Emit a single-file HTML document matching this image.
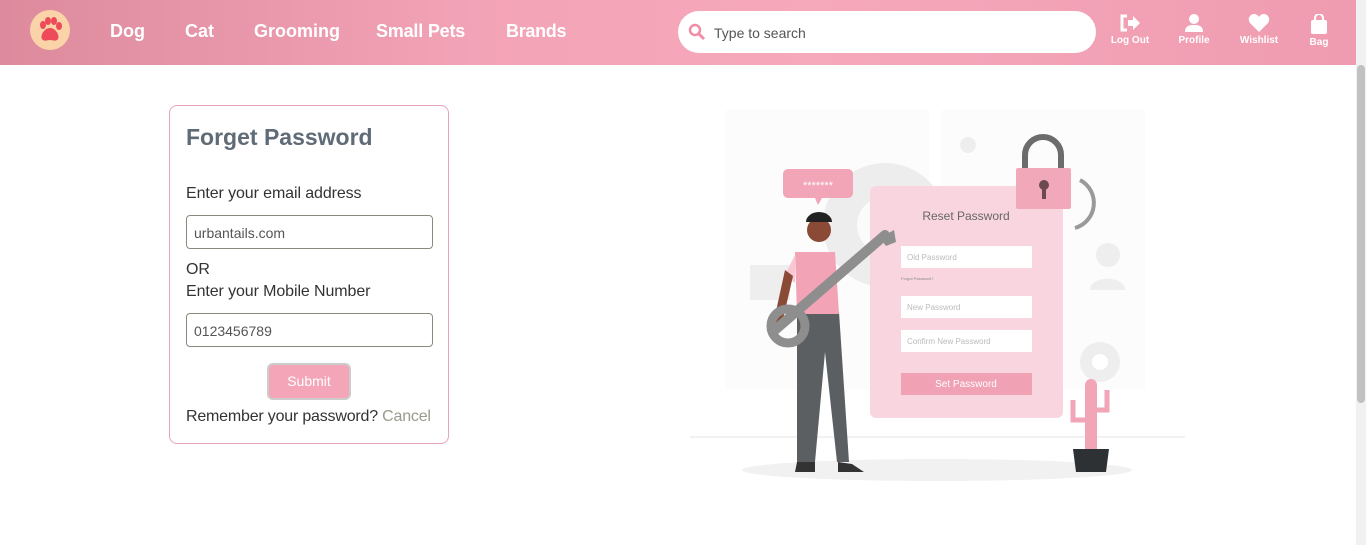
<!DOCTYPE html>
<html><head><meta charset="utf-8"><style>
*{box-sizing:border-box;margin:0;padding:0}
body{width:1366px;height:545px;overflow:hidden;background:#fff;font-family:"Liberation Sans",sans-serif;position:relative}
.hdr{position:absolute;left:0;top:0;width:1356px;height:65px;background:linear-gradient(90deg,#dd8a9d 0%,#f3a3b6 35%,#f6a9bb 60%,#ef9bb0 100%)}
.logo{position:absolute;left:30px;top:10px;width:40px;height:40px;border-radius:50%;background:#fbd3a8}
.nav{position:absolute;top:21px;color:#fff;font-weight:bold;font-size:18px}
.search{position:absolute;left:678px;top:11px;width:418px;height:42px;background:#fff;border-radius:21px}
.search span{position:absolute;left:36px;top:14px;font-size:14px;color:#555}
.ic{position:absolute;top:14px;width:50px;text-align:center;color:#fff;font-size:10px;font-weight:bold}
.ic svg{display:block;margin:0 auto 3px}
.sb{position:absolute;left:1356px;top:0;width:10px;height:545px;background:#f1f1f1}
.sb i{position:absolute;left:1px;top:65px;width:8px;height:338px;background:#c1c1c1;border-radius:4px}
.card{position:absolute;left:169px;top:105px;width:280px;height:339px;border:1px solid #e6a3c0;border-radius:8px;color:#444}
.card h1{position:absolute;left:16px;top:18px;font-size:23px;color:#5f6b76;font-weight:bold}
.lbl{position:absolute;left:16px;font-size:16px;color:#333;letter-spacing:-0.1px}
.inp{position:absolute;left:16px;width:247px;height:34px;border:1px solid #8a8a7c;border-radius:4px;font-size:14px;color:#555;padding:9px 7px}
.btn{position:absolute;left:97px;top:257px;width:84px;height:37px;background:#f4a6b8;border:2px solid #ccc;border-radius:6px;color:#fff;font-size:14px;text-align:center;line-height:33px}
</style></head><body>
<div class="hdr">
 <div class="logo"><svg width="40" height="40" viewBox="0 0 40 40"><g fill="#ee4a5a"><ellipse cx="13" cy="15" rx="3" ry="4"/><ellipse cx="18" cy="11" rx="3" ry="4"/><ellipse cx="24" cy="11" rx="3" ry="4"/><ellipse cx="29" cy="16" rx="3" ry="4"/><path d="M20 18c-6 0-10 8-8 11s5 1 8 1 6 2 8-1-2-11-8-11z"/></g></svg></div>
 <div class="nav" style="left:110px">Dog</div>
 <div class="nav" style="left:185px">Cat</div>
 <div class="nav" style="left:254px">Grooming</div>
 <div class="nav" style="left:376px;letter-spacing:-0.2px">Small Pets</div>
 <div class="nav" style="left:506px;letter-spacing:-0.3px">Brands</div>
 <div class="search"><svg style="position:absolute;left:10px;top:12px" width="18" height="18" viewBox="0 0 18 18"><circle cx="7" cy="7" r="5" fill="none" stroke="#ef8ea6" stroke-width="2.5"/><path d="M11 11l5 5" stroke="#ef8ea6" stroke-width="3"/></svg><span>Type to search</span></div>
 <div class="ic" style="left:1105px"><svg width="22" height="18" viewBox="0 0 22 18"><path d="M8 2H3v14h5" fill="none" stroke="#fff" stroke-width="3"/><path d="M9 6h5V2l7 7-7 7v-4H9z" fill="#fff"/></svg>Log Out</div>
 <div class="ic" style="left:1169px"><svg width="20" height="18" viewBox="0 0 20 18"><circle cx="10" cy="5" r="5" fill="#fff"/><path d="M1 18c0-6 4-7 9-7s9 1 9 7z" fill="#fff"/></svg>Profile</div>
 <div class="ic" style="left:1234px"><svg width="22" height="18" viewBox="0 0 22 18"><path d="M11 18L2 9C-1 5 2 0 6 0c2 0 4 1 5 3 1-2 3-3 5-3 4 0 7 5 4 9z" fill="#fff"/></svg>Wishlist</div>
 <div class="ic" style="left:1294px"><svg width="18" height="20" viewBox="0 0 18 20"><path d="M5 6V4a4 4 0 018 0v2" fill="none" stroke="#fff" stroke-width="2"/><rect x="1" y="6" width="16" height="14" rx="2" fill="#fff"/></svg>Bag</div>
</div>
<div class="sb"><i></i></div>
<div class="card">
 <h1>Forget Password</h1>
 <div class="lbl" style="top:79px">Enter your email address</div>
 <div class="inp" style="top:109px">urbantails.com</div>
 <div class="lbl" style="top:155px">OR</div>
 <div class="lbl" style="top:177px">Enter your Mobile Number</div>
 <div class="inp" style="top:207px">0123456789</div>
 <div class="btn">Submit</div>
 <div class="lbl" style="top:302px;letter-spacing:-0.2px">Remember your password? <span style="color:#9a9a8a">Cancel</span></div>
</div>
<svg style="position:absolute;left:0;top:0" width="1356" height="545" viewBox="0 0 1356 545">
 <rect x="726" y="110" width="203" height="280" fill="#fcfcfc"/>
 <rect x="942" y="110" width="203" height="280" fill="#fcfcfc"/>
 <line x1="690" y1="437" x2="1185" y2="437" stroke="#f2f2f2" stroke-width="2"/>
 <circle cx="885" cy="225" r="62" fill="#ededed"/><circle cx="885" cy="225" r="28" fill="#fbfbfb"/>
 <circle cx="1100" cy="362" r="20" fill="#eee"/><circle cx="1100" cy="362" r="8" fill="#fff"/>
 <circle cx="968" cy="145" r="8" fill="#eee"/><circle cx="1108" cy="255" r="12" fill="#eee"/><path d="M1090 290c0-15 35-15 35 0z" fill="#eee"/>
 <rect x="750" y="265" width="40" height="35" fill="#eee"/>
 <ellipse cx="937" cy="470" rx="195" ry="11" fill="#f1f1f1"/>
 <rect x="870" y="186" width="193" height="232" rx="6" fill="#f9d6df"/>
 <text x="966" y="220" font-size="12" fill="#666" text-anchor="middle" font-family="Liberation Sans">Reset Password</text>
 <rect x="901" y="246" width="131" height="22" fill="#fff"/><text x="907" y="260" font-size="8" fill="#bbb" font-family="Liberation Sans">Old Password</text>
 <text x="901" y="280" font-size="4" fill="#888" font-family="Liberation Sans">Forgot Password?</text>
 <rect x="901" y="296" width="131" height="22" fill="#fff"/><text x="907" y="310" font-size="8" fill="#bbb" font-family="Liberation Sans">New Password</text>
 <rect x="901" y="330" width="131" height="22" fill="#fff"/><text x="907" y="344" font-size="8" fill="#bbb" font-family="Liberation Sans">Confirm New Password</text>
 <rect x="901" y="373" width="131" height="22" fill="#f0a1b4"/><text x="966" y="387" font-size="10" fill="#fff" text-anchor="middle" font-family="Liberation Sans">Set Password</text>
 <path d="M1025 170v-15a18 18 0 0136 0v15" fill="none" stroke="#6c6c6c" stroke-width="6"/>
 <rect x="1016" y="168" width="55" height="41" rx="2" fill="#f1a9ba"/><circle cx="1044" cy="185" r="5" fill="#6b4b50"/><rect x="1042" y="186" width="4" height="13" fill="#6b4b50"/>
 <path d="M1080 180a26 26 0 01-5 48" fill="none" stroke="#999" stroke-width="4"/>
 <rect x="783" y="169" width="70" height="29" rx="5" fill="#f1a5b7"/><path d="M815 198l3 7 4-7z" fill="#f1a5b7"/><text x="818" y="189" font-size="11" fill="#fff" text-anchor="middle" font-family="Liberation Sans">*******</text>
 <path d="M797 312h42l10 150h-12l-12-110-10 110h-18z" fill="#5b5f61"/>
 <path d="M797 462l-2 10h20v-10zM838 462v10h26l-12-8z" fill="#333"/>
 <path d="M795 252h40l4 62h-42z" fill="#f2a3b6"/>
 <path d="M795 255l-10 20 10 8z" fill="#f9c6d2"/>
 <path d="M785 270l-12 55 8 3 12-52z" fill="#8a4a36"/>
 <circle cx="819" cy="230" r="12" fill="#8a4a36"/><path d="M806 222a13 10 0 0126 0z" fill="#222"/>
 <path d="M775 330L885 235" stroke="#8e8e8e" stroke-width="10" stroke-linecap="round"/>
 <path d="M880 238l14 -8 2 12-10 4z" fill="#8e8e8e"/>
 <circle cx="788" cy="326" r="17" fill="none" stroke="#8e8e8e" stroke-width="9"/>
 <path d="M1085 450v-65a6 6 0 0112 0v65z" fill="#f1a5b6"/><path d="M1085 420h-12v-20M1097 410h10v-20" fill="none" stroke="#f1a5b6" stroke-width="5"/>
 <path d="M1073 449h36l-3 23h-30z" fill="#2e3133"/>
</svg>
</body></html>
